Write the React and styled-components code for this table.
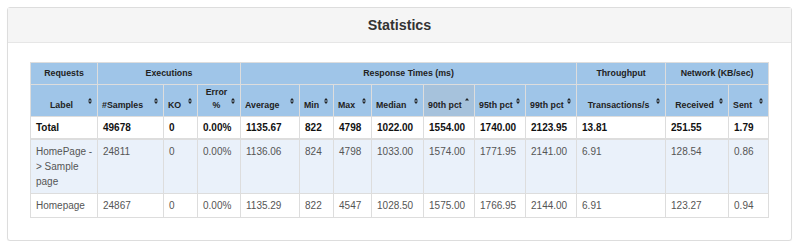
import React from 'react';
import styled, { createGlobalStyle } from 'styled-components';

const GlobalStyle = createGlobalStyle`
  body {
    margin: 0;
    background: #fff;
    font-family: "Liberation Sans", Arial, sans-serif;
  }
`;

const Page = styled.div`
  padding: 7px 8px 0 7px;
`;

const Panel = styled.div`
  border: 1px solid #ddd;
  border-radius: 3px;
  box-shadow: 0 1px 1px rgba(0, 0, 0, 0.05);
  background: #fff;
`;

const PanelHeading = styled.div`
  background: #f5f5f5;
  border-bottom: 1px solid #e6e6e6;
  height: 34px;
  display: flex;
  align-items: center;
  justify-content: center;
`;

const Title = styled.h3`
  margin: 0;
  font-size: 14.3px;
  font-weight: bold;
  color: #333;
`;

const PanelBody = styled.div`
  padding: 19px 23px 22px 22px;
`;

const Table = styled.table`
  width: 738px;
  table-layout: fixed;
  border-collapse: collapse;
  font-size: 10px;
  line-height: 15px;
`;

const GroupHead = styled.th`
  background: #9fc5e8;
  border: 1px solid #ddd;
  color: #222;
  font-size: 8.8px;
  font-weight: bold;
  text-align: center;
  height: 21px;
  padding: 0 4px;
`;

const SortHead = styled.th`
  position: relative;
  background: ${(p) => (p.$sorted ? '#a6c2dc' : '#9fc5e8')};
  border: 1px solid #ddd;
  color: #222;
  font-size: 8.8px;
  line-height: 13px;
  font-weight: bold;
  text-align: ${(p) => (p.$center ? 'center' : 'left')};
  vertical-align: bottom;
  height: 32px;
  padding: 0 9px 4px 4px;
  box-sizing: border-box;
  white-space: ${(p) => (p.$wrap ? 'normal' : 'nowrap')};
`;

const SortIcon = styled.svg`
  position: absolute;
  right: 5px;
  top: 50%;
  transform: translateY(-50%);
  width: 4px;
  height: 7px;
`;

const Cell = styled.td`
  border: 1px solid #ddd;
  padding: ${(p) => (p.$bold ? '3px 3px 3px 5px' : '4px 3px 4px 5px')};
  vertical-align: top;
  color: ${(p) => (p.$bold ? '#111' : '#555')};
  font-weight: ${(p) => (p.$bold ? 'bold' : 'normal')};
  word-wrap: break-word;
`;

const Row = styled.tr`
  background: ${(p) => (p.$striped ? '#eaf1fa' : '#fff')};
  border-bottom: ${(p) => (p.$total ? '2px solid #ddd' : '1px solid #ddd')};
`;

const Sort = ({ dir }) => (
  <SortIcon viewBox="0 0 4 7">
    {dir !== 'asc-only' && <path d="M0 4 L4 4 L2 6.6 Z" fill="#222" />}
    <path d="M0 3 L4 3 L2 0.4 Z" fill="#222" />
  </SortIcon>
);

const widths = [67, 66, 34, 43, 59, 34, 38, 52, 51, 51, 51, 89, 63, 40];

const groups = [
  ['Requests', 1],
  ['Executions', 3],
  ['Response Times (ms)', 7],
  ['Throughput', 1],
  ['Network (KB/sec)', 2],
];

const columns = [
  { label: 'Label', center: true },
  { label: '#Samples' },
  { label: 'KO' },
  { label: 'Error %', center: true, wrap: true },
  { label: 'Average' },
  { label: 'Min' },
  { label: 'Max' },
  { label: 'Median' },
  { label: '90th pct', sorted: true },
  { label: '95th pct' },
  { label: '99th pct' },
  { label: 'Transactions/s', center: true },
  { label: 'Received', center: true },
  { label: 'Sent' },
];

const rows = [
  {
    bold: true,
    cells: ['Total', '49678', '0', '0.00%', '1135.67', '822', '4798', '1022.00', '1554.00', '1740.00', '2123.95', '13.81', '251.55', '1.79'],
  },
  {
    striped: true,
    cells: ['HomePage -> Sample page', '24811', '0', '0.00%', '1136.06', '824', '4798', '1033.00', '1574.00', '1771.95', '2141.00', '6.91', '128.54', '0.86'],
  },
  {
    cells: ['Homepage', '24867', '0', '0.00%', '1135.29', '822', '4547', '1028.50', '1575.00', '1766.95', '2144.00', '6.91', '123.27', '0.94'],
  },
];

const App = () => (
  <Page>
    <GlobalStyle />
    <Panel>
      <PanelHeading>
        <Title>Statistics</Title>
      </PanelHeading>
      <PanelBody>
        <Table>
          <colgroup>
            {widths.map((w, i) => (
              <col key={i} style={{ width: `${w}px` }} />
            ))}
          </colgroup>
          <thead>
            <tr>
              {groups.map(([name, span]) => (
                <GroupHead key={name} colSpan={span}>{name}</GroupHead>
              ))}
            </tr>
            <tr>
              {columns.map((c) => (
                <SortHead key={c.label} $center={c.center} $sorted={c.sorted} $wrap={c.wrap}>
                  {c.label}
                  <Sort dir={c.sorted ? 'asc-only' : 'both'} />
                </SortHead>
              ))}
            </tr>
          </thead>
          <tbody>
            {rows.map((r, i) => (
              <Row key={i} $striped={r.striped} $total={r.bold}>
                {r.cells.map((v, j) => (
                  <Cell key={j} $bold={r.bold}>{v}</Cell>
                ))}
              </Row>
            ))}
          </tbody>
        </Table>
      </PanelBody>
    </Panel>
  </Page>
);

export default App;
